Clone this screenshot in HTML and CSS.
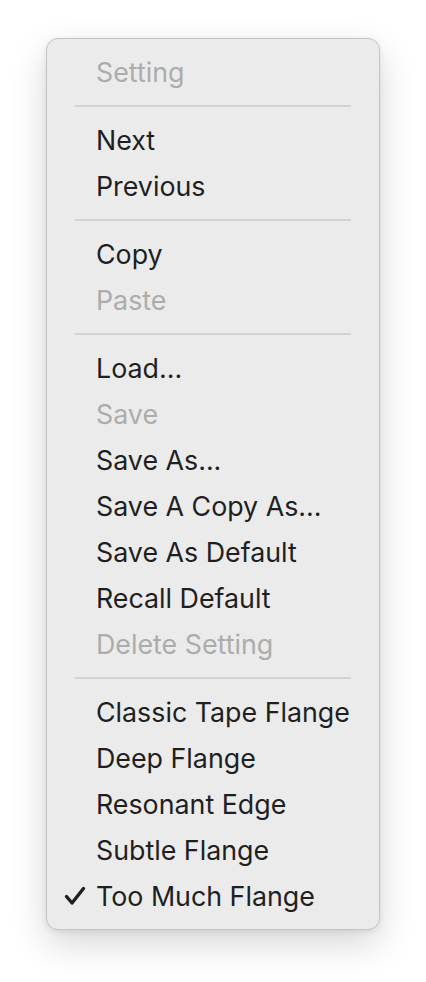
FILE: index.html
```html
<!DOCTYPE html>
<html lang="en">
<head>
    <meta charset="UTF-8">
    <meta name="viewport" content="width=device-width, initial-scale=1.0">
    <title>Setting Menu</title>
    <link rel="stylesheet" href="styles.css">
</head>
<body>

<div class="menu">
    <div class="menu-item disabled">Setting</div>
    <div class="menu-sep"></div>
    <div class="menu-item">Next</div>
    <div class="menu-item">Previous</div>
    <div class="menu-sep"></div>
    <div class="menu-item">Copy</div>
    <div class="menu-item disabled">Paste</div>
    <div class="menu-sep"></div>
    <div class="menu-item">Load...</div>
    <div class="menu-item disabled">Save</div>
    <div class="menu-item">Save As...</div>
    <div class="menu-item">Save A Copy As...</div>
    <div class="menu-item">Save As Default</div>
    <div class="menu-item">Recall Default</div>
    <div class="menu-item disabled">Delete Setting</div>
    <div class="menu-sep"></div>
    <div class="menu-item">Classic Tape Flange</div>
    <div class="menu-item">Deep Flange</div>
    <div class="menu-item">Resonant Edge</div>
    <div class="menu-item">Subtle Flange</div>
    <div class="menu-item checked">
        <svg class="check" width="22" height="20" viewBox="0 0 22 20"><path d="M2.5 10.5 L8 17 L19.5 2.5" fill="none" stroke="#1f1f1f" stroke-width="3.4" stroke-linecap="round" stroke-linejoin="round"/></svg>
        Too Much Flange
    </div>
</div>

</body>
</html>
```

FILE: styles.css
```css
body {
    margin: 0;
    padding: 38px 0 60px 46px;
    background-color: #ffffff;
    font-family: Inter, "Noto Sans", sans-serif;
}
.menu {
    width: 332px;
    padding: 10px 0;
    background-color: #ebebeb; /* light grey menu surface */
    border: 1px solid #c4c4c4;
    border-radius: 12px;
    box-shadow: 0 14px 36px rgba(0,0,0,0.16), 0 2px 6px rgba(0,0,0,0.08);
}
.menu-item {
    position: relative;
    height: 46px;
    line-height: 46px;
    padding-left: 49px;
    font-size: 26.8px;
    color: #1f1f1f;
    white-space: nowrap;
}
.menu-item.disabled {
    color: #acacac;
}
.menu-sep {
    height: 2px;
    margin: 10px 28px;
    background-color: #d3d3d3;
}
.check {
    position: absolute;
    left: 17px;
    top: 13px;
}
```
